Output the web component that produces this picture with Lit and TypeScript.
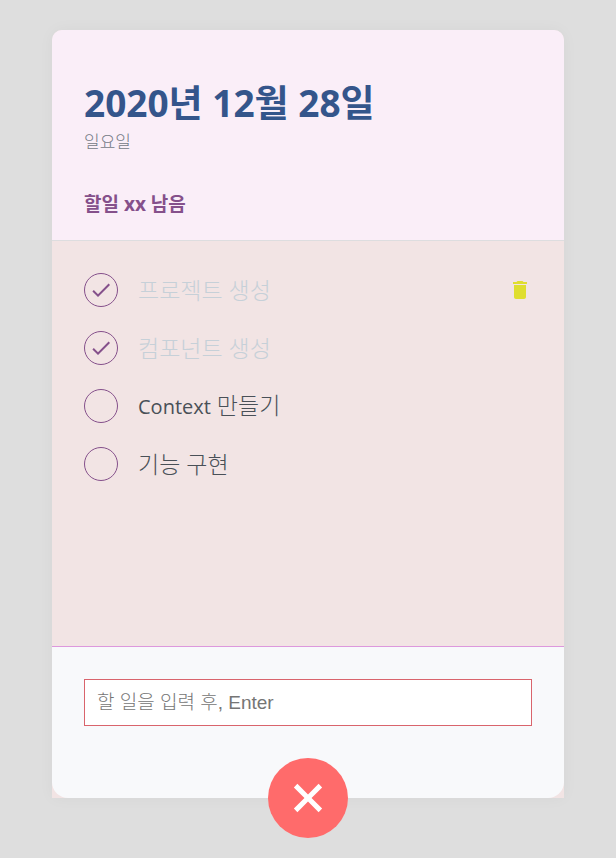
import { LitElement, html, css, nothing } from "lit";
import { customElement, state } from "lit/decorators.js";
import { classMap } from "lit/directives/class-map.js";

interface Todo {
  id: number;
  text: string;
  done: boolean;
}

@customElement("todo-head")
class TodoHead extends LitElement {
  static styles = css`
    :host {
      display: block;
      padding: 48px 32px 24px;
      background: #faeef8;
      border-bottom: 1px solid #dddddf;
      border-radius: 10px 10px 0 0;
    }
    h1 {
      margin: 0;
      font-size: 37px;
      line-height: 50px;
      color: #34558b;
    }
    .day {
      margin-top: 4px;
      font-size: 17px;
      line-height: 20px;
      font-weight: 300;
      color: #747a86;
    }
    .left {
      margin-top: 40px;
      font-size: 19px;
      line-height: 24px;
      font-weight: bold;
      color: #85508b;
    }
  `;
  render() {
    return html`
      <h1>2020년 12월 28일</h1>
      <div class="day">일요일</div>
      <div class="left">할일 xx 남음</div>
    `;
  }
}

@customElement("todo-list")
class TodoList extends LitElement {
  @state() todos: Todo[] = [
    { id: 1, text: "프로젝트 생성", done: true },
    { id: 2, text: "컴포넌트 생성", done: true },
    { id: 3, text: "Context 만들기", done: false },
    { id: 4, text: "기능 구현", done: false },
  ];
  @state() active = 1;

  static styles = css`
    :host {
      display: block;
      flex: 1;
      padding: 20px 32px 48px;
    }
    ul {
      margin: 0;
      padding: 0;
      list-style: none;
    }
    .item {
      display: flex;
      align-items: center;
      padding: 12px 0;
    }
    .check {
      display: grid;
      flex: none;
      width: 34px;
      height: 34px;
      margin-right: 20px;
      place-items: center;
    }
    .check > * {
      grid-area: 1 / 1;
    }
    .box {
      appearance: none;
      box-sizing: border-box;
      width: 34px;
      height: 34px;
      margin: 0;
      border: 1px solid #85508b;
      border-radius: 50%;
      cursor: pointer;
    }
    .mark {
      fill: #85508b;
      pointer-events: none;
    }
    .text {
      flex: 1;
      font-size: 23px;
      line-height: 32px;
      font-weight: 300;
      color: #495057;
    }
    .latin {
      font-size: 20px;
      font-weight: 400;
    }
    .done .text {
      color: #c6d0d8;
    }
    .remove {
      display: flex;
      padding: 0;
      border: 0;
      background: none;
      cursor: pointer;
    }
    .remove svg {
      fill: #dfde2f;
    }
  `;

  toggle(id: number) {
    this.todos = this.todos.map((t) => (t.id === id ? { ...t, done: !t.done } : t));
  }

  remove(id: number) {
    this.todos = this.todos.filter((t) => t.id !== id);
  }

  label(text: string) {
    return text
      .split(/([A-Za-z]+)/)
      .map((part) => (/^[A-Za-z]/.test(part) ? html`<span class="latin">${part}</span>` : part));
  }

  render() {
    return html`<ul>
      ${this.todos.map(
        (t) => html`<li
          class=${classMap({ item: true, done: t.done })}
          @mouseenter=${() => (this.active = t.id)}
        >
          <span class="check">
            <input
              class="box"
              type="checkbox"
              id="todo-${t.id}"
              .checked=${t.done}
              @change=${() => this.toggle(t.id)}
            />
            ${t.done
              ? html`<svg class="mark" width="24" height="24" viewBox="0 0 24 24" aria-hidden="true">
                  <path d="M9 16.2L4.8 12l-1.4 1.4L9 19 21 7l-1.4-1.4L9 16.2z" />
                </svg>`
              : nothing}
          </span>
          <label class="text" for="todo-${t.id}">${this.label(t.text)}</label>
          ${t.id === this.active
            ? html`<button class="remove" type="button" aria-label="삭제" @click=${() => this.remove(t.id)}>
                <svg width="24" height="24" viewBox="0 0 24 24" aria-hidden="true">
                  <path
                    d="M6 19c0 1.1.9 2 2 2h8c1.1 0 2-.9 2-2V7H6v12zM19 4h-3.5l-1-1h-5l-1 1H5v2h14V4z"
                  />
                </svg>
              </button>`
            : nothing}
        </li>`
      )}
    </ul>`;
  }
}

@customElement("todo-create")
class TodoCreate extends LitElement {
  static styles = css`
    :host {
      display: block;
      position: relative;
    }
    form {
      padding: 32px 32px 72px;
      background: #f8f9fb;
      border-top: 1px solid #dd98dd;
      border-radius: 0 0 16px 16px;
    }
    .field {
      display: block;
      box-sizing: border-box;
      width: 100%;
      height: 47px;
      padding: 12px;
      border: 1px solid #d9646c;
      border-radius: 0;
      outline: none;
      background: #fff;
      font-family: "Liberation Sans", "Noto Sans CJK KR", sans-serif;
      font-size: 19px;
      font-weight: 300;
    }
    .field::placeholder {
      color: #757575;
    }
    .toggle {
      position: absolute;
      left: 50%;
      bottom: 0;
      display: flex;
      align-items: center;
      justify-content: center;
      width: 80px;
      height: 80px;
      padding: 0;
      border: 0;
      border-radius: 50%;
      background: #ff6b6b;
      transform: translate(-50%, 50%);
      cursor: pointer;
    }
    .toggle svg {
      fill: #fff;
      transform: rotate(45deg);
    }
  `;
  render() {
    return html`
      <form @submit=${(e: Event) => e.preventDefault()}>
        <input class="field" type="text" aria-label="할 일" placeholder="할 일을 입력 후, Enter" />
      </form>
      <button class="toggle" type="button" aria-label="닫기">
        <svg width="60" height="60" viewBox="0 0 24 24" aria-hidden="true">
          <path d="M19 13h-6v6h-2v-6H5v-2h6V5h2v6h6v2z" />
        </svg>
      </button>
    `;
  }
}

@customElement("app-root")
class AppRoot extends LitElement {
  static styles = css`
    :host {
      display: flex;
      justify-content: center;
      box-sizing: border-box;
      min-height: 100vh;
      padding: 30px 24px 60px;
      background: #dedede;
      font-family: "Open Sans", "Noto Sans CJK KR", sans-serif;
    }
    .card {
      display: flex;
      flex-direction: column;
      flex: 1;
      max-width: 512px;
      background: #f2e4e4;
      border-radius: 10px 10px 0 0;
      box-shadow: 0 0 16px rgba(0, 0, 0, 0.04);
    }
  `;
  render() {
    return html`<main class="card">
      <todo-head></todo-head>
      <todo-list></todo-list>
      <todo-create></todo-create>
    </main>`;
  }
}
